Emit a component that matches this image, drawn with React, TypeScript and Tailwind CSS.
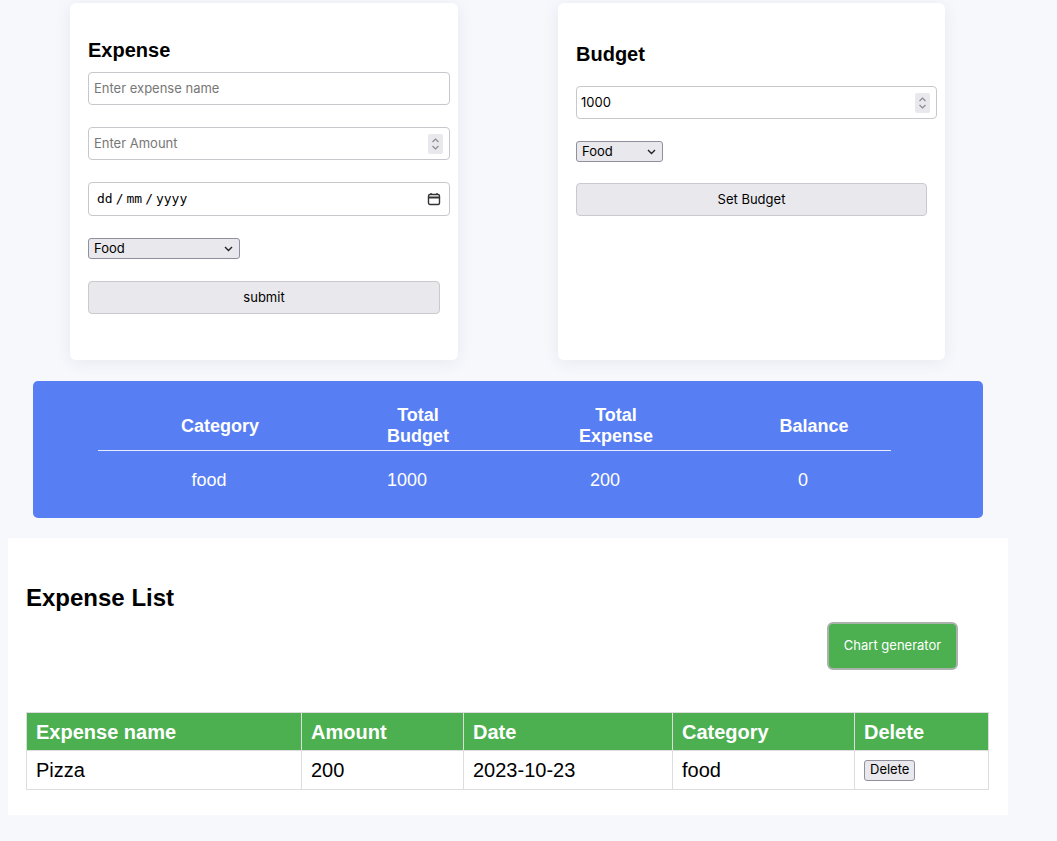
import React from "react";

const ui = { fontFamily: "Inter, 'Noto Sans', sans-serif" };
const arial = { fontFamily: "'Liberation Sans', Arial, sans-serif" };
const mono = { fontFamily: "'DejaVu Sans Mono', monospace" };

const Spinner = () => (
  <div className="flex h-[20px] w-[15px] items-center justify-center rounded-[2px] bg-[#e9e9ed]">
    <svg width="9" height="14" viewBox="0 0 9 14" fill="none" stroke="#8a8a92" strokeWidth="1.2">
      <path d="M1.5 5 L4.5 2 L7.5 5" />
      <path d="M1.5 9 L4.5 12 L7.5 9" />
    </svg>
  </div>
);

const Chevron = () => (
  <svg width="9" height="6" viewBox="0 0 9 6" fill="none" stroke="#222" strokeWidth="1.4">
    <path d="M1 1 L4.5 4.5 L8 1" />
  </svg>
);

const FakeSelect = ({ width }: { width: string }) => (
  <div
    className={`flex h-[21px] ${width} items-center justify-between rounded-[3px] border border-[#8f8f9d] bg-[#e9e9ed] pl-[5px] pr-[6px] text-[13px] text-black`}
    style={ui}
  >
    <span>Food</span>
    <Chevron />
  </div>
);

const GrayButton = ({ label, width }: { label: string; width: string }) => (
  <button
    className={`flex h-[33px] ${width} items-center justify-center rounded-[4px] border border-[#c9c9cf] bg-[#e9e9ed] text-[13px] text-black`}
    style={ui}
  >
    {label}
  </button>
);

const ExpenseCard = () => (
  <div className="h-[357px] w-[388px] rounded-[6px] bg-white pl-[18px] pr-[8px] pt-[35px] shadow-[0_2px_16px_rgba(40,50,90,0.08)]">
    <h2 className="text-[20px] font-bold leading-[24px] text-black" style={arial}>
      Expense
    </h2>
    <div className="mt-[10px] flex h-[33px] items-center rounded-[4px] border border-[#c8c8cc] px-[5px] text-[13px] text-[#777]" style={ui}>
      Enter expense name
    </div>
    <div className="mt-[22px] flex h-[33px] items-center justify-between rounded-[4px] border border-[#c8c8cc] pl-[5px] pr-[6px] text-[13px] text-[#777]" style={ui}>
      <span>Enter Amount</span>
      <Spinner />
    </div>
    <div className="mt-[22px] flex h-[34px] items-center justify-between rounded-[4px] border border-[#c8c8cc] pl-[8px] pr-[8px] text-[13px] text-black">
      <span className="flex items-center gap-[3px] text-[13px]" style={mono}>
        <span>dd</span>
        <span>/</span>
        <span>mm</span>
        <span>/</span>
        <span>yyyy</span>
      </span>
      <svg width="14" height="14" viewBox="0 0 14 14" fill="none" stroke="#333" strokeWidth="1.4">
        <rect x="1.5" y="2.5" width="11" height="10" rx="1.5" />
        <path d="M1.5 5.5 H12.5" strokeWidth="2" />
        <path d="M4 1 V3 M10 1 V3" />
      </svg>
    </div>
    <div className="mt-[22px]">
      <FakeSelect width="w-[152px]" />
    </div>
    <div className="mt-[22px]">
      <GrayButton label="submit" width="w-[352px]" />
    </div>
  </div>
);

const BudgetCard = () => (
  <div className="h-[357px] w-[387px] rounded-[6px] bg-white pl-[18px] pr-[8px] pt-[39px] shadow-[0_2px_16px_rgba(40,50,90,0.08)]">
    <h2 className="text-[20px] font-bold leading-[24px] text-black" style={arial}>
      Budget
    </h2>
    <div className="mt-[20px] flex h-[33px] items-center justify-between rounded-[4px] border border-[#c8c8cc] pl-[4px] pr-[6px] text-[13px] text-black" style={ui}>
      <span>1000</span>
      <Spinner />
    </div>
    <div className="mt-[22px]">
      <FakeSelect width="w-[87px]" />
    </div>
    <div className="mt-[21px]">
      <GrayButton label="Set Budget" width="w-[351px]" />
    </div>
  </div>
);

const Summary = () => (
  <div className="ml-[33px] mt-[21px] h-[137px] w-[950px] rounded-[5px] bg-[#587ef3] pt-[24px] text-white" style={arial}>
    <div className="ml-[88px] grid w-[792px] grid-cols-4 text-center text-[18px] font-bold leading-[21px]">
      <div className="flex h-[42px] items-center justify-center">Category</div>
      <div className="flex h-[42px] items-center justify-center">
        Total
        <br />
        Budget
      </div>
      <div className="flex h-[42px] items-center justify-center">
        Total
        <br />
        Expense
      </div>
      <div className="flex h-[42px] items-center justify-center">Balance</div>
    </div>
    <div className="ml-[65px] mt-[3px] h-px w-[793px] bg-[#e8ecff]" />
    <div className="ml-[77px] mt-[19px] grid w-[792px] grid-cols-4 text-center text-[18px] leading-[21px]">
      <div>food</div>
      <div>1000</div>
      <div>200</div>
      <div>0</div>
    </div>
  </div>
);

const ExpenseList = () => (
  <div className="ml-[8px] mt-[20px] h-[277px] w-[1000px] bg-white pl-[18px] pr-[19px] pt-[46px]" style={arial}>
    <h2 className="text-[24px] font-bold leading-[28px] text-black">Expense List</h2>
    <div className="flex justify-end pr-[31px]">
      <button
        className="mt-[10px] flex h-[48px] w-[131px] items-center justify-center rounded-[6px] border-2 border-[#a9b3ab] bg-[#4caf50] text-[13px] text-white"
        style={ui}
      >
        Chart generator
      </button>
    </div>
    <table className="mt-[42px] w-[963px] border-collapse text-[20px]">
      <thead>
        <tr className="h-[38px] bg-[#4caf50] text-left font-bold text-white">
          <th className="w-[275px] border border-[#dddddd] pl-[9px] font-bold">Expense name</th>
          <th className="w-[162px] border border-[#dddddd] pl-[9px] font-bold">Amount</th>
          <th className="w-[209px] border border-[#dddddd] pl-[9px] font-bold">Date</th>
          <th className="w-[182px] border border-[#dddddd] pl-[9px] font-bold">Category</th>
          <th className="border border-[#dddddd] pl-[9px] font-bold">Delete</th>
        </tr>
      </thead>
      <tbody>
        <tr className="h-[39px] text-black">
          <td className="border border-[#dddddd] pl-[9px]">Pizza</td>
          <td className="border border-[#dddddd] pl-[9px]">200</td>
          <td className="border border-[#dddddd] pl-[9px]">2023-10-23</td>
          <td className="border border-[#dddddd] pl-[9px]">food</td>
          <td className="border border-[#dddddd] pl-[9px]">
            <button
              className="flex h-[21px] items-center rounded-[3px] border border-[#8f8f9d] bg-[#e9e9ed] px-[5px] text-[13px] text-black"
              style={ui}
            >
              Delete
            </button>
          </td>
        </tr>
      </tbody>
    </table>
  </div>
);

export default function App() {
  return (
    <div className="min-h-[841px] w-full bg-[#f7f8fc] pt-[3px]">
      <div className="flex gap-[100px] pl-[70px]">
        <ExpenseCard />
        <BudgetCard />
      </div>
      <Summary />
      <ExpenseList />
    </div>
  );
}
